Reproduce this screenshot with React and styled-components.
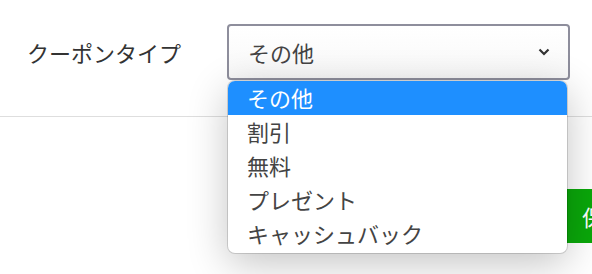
import React from "react"
import styled, { createGlobalStyle } from "styled-components"

const GlobalStyle = createGlobalStyle`
  html, body {
    margin: 0;
    padding: 0;
    background: #fff;
  }
  body {
    font-family: "Noto Sans CJK JP", "Noto Sans", sans-serif;
    color: #333;
  }
`

const Page = styled.div`
  width: 100%;
  height: 100vh;
  min-height: 274px;
  overflow: hidden;
`

const FormRow = styled.div`
  display: flex;
  align-items: center;
  padding: 24px 0 36px 27px;
  border-bottom: 1px solid #dedede;
`

const Label = styled.div`
  width: 200px;
  flex-shrink: 0;
  font-size: 22px;
  color: #333;
`

const SelectWrap = styled.div`
  position: relative;
`

const SelectBox = styled.div`
  box-sizing: border-box;
  width: 343px;
  height: 56px;
  display: flex;
  align-items: center;
  justify-content: space-between;
  padding: 0 18px 0 19px;
  border: 2px solid #8e8e9c;
  border-radius: 4px;
  background: linear-gradient(#fff, #f8f8f8);
  font-size: 22px;
  color: #444;
`

const Menu = styled.ul`
  position: absolute;
  top: 57px;
  left: 1px;
  width: 339px;
  margin: 0;
  padding: 0 0 2px;
  list-style: none;
  background: #fff;
  border-radius: 7px;
  box-shadow: 0 0 0 1px rgba(0, 0, 0, 0.14), 0 10px 40px rgba(0, 0, 0, 0.24);
  overflow: hidden;
  z-index: 10;
`

const Option = styled.li`
  box-sizing: border-box;
  height: 34px;
  display: flex;
  align-items: center;
  padding: 0 0 2px 19px;
  font-size: 22px;
  line-height: 1;
  color: ${p => (p.$active ? "#fff" : "#444")};
  background: ${p => (p.$active ? "#1e8fff" : "transparent")};
`

const Footer = styled.div`
  width: 700px;
  display: flex;
  justify-content: flex-end;
  padding-top: 72px;
`

const SaveButton = styled.button`
  width: 133px;
  height: 54px;
  border: none;
  background: #0aa80a;
  color: #fff;
  font-family: inherit;
  font-size: 22px;
  text-align: left;
  padding-left: 15px;
`

const options = ["その他", "割引", "無料", "プレゼント", "キャッシュバック"]

const Chevron = () => (
  <svg width="12" height="8" viewBox="0 0 12 8">
    <path d="M1.5 1.5 L6 6 L10.5 1.5" fill="none" stroke="#333" strokeWidth="2.2" />
  </svg>
)

export default function App() {
  return (
    <Page>
      <GlobalStyle />
      <FormRow>
        <Label>クーポンタイプ</Label>
        <SelectWrap>
          <SelectBox>
            <span>その他</span>
            <Chevron />
          </SelectBox>
          <Menu>
            {options.map((o, i) => (
              <Option key={o} $active={i === 0}>
                {o}
              </Option>
            ))}
          </Menu>
        </SelectWrap>
      </FormRow>
      <Footer>
        <SaveButton>保存</SaveButton>
      </Footer>
    </Page>
  )
}
